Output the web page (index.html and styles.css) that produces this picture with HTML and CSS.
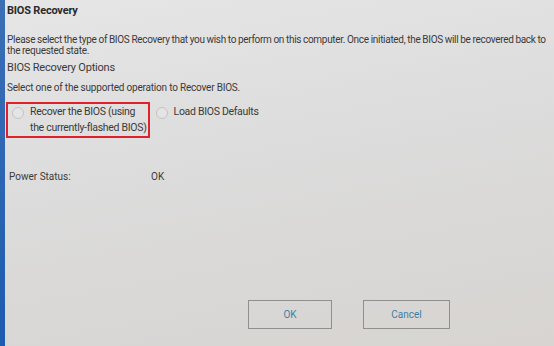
FILE: index.html
```html
<!DOCTYPE html>
<html lang="en">
<head>
  <meta charset="UTF-8">
  <title>BIOS Recovery</title>
  <link rel="stylesheet" href="styles.css">
</head>
<body>
  <div class="screen">
    <div class="edge"></div>
    <div class="panel">
      <h1>BIOS Recovery</h1>
      <p class="intro">Please select the type of BIOS Recovery that you wish to perform on this computer. Once initiated, the BIOS will be recovered back to the requested state.</p>
      <h2>BIOS Recovery Options</h2>
      <p class="hint">Select one of the supported operation to Recover BIOS.</p>

      <div class="options">
        <label class="option selected">
          <span class="radio"></span>
          <span class="option-text">Recover the BIOS (using<br>the currently-flashed BIOS)</span>
        </label>
        <label class="option">
          <span class="radio"></span>
          <span class="option-text">Load BIOS Defaults</span>
        </label>
      </div>

      <div class="status">
        <span class="status-label">Power Status:</span>
        <span class="status-value">OK</span>
      </div>

      <div class="actions">
        <button class="btn">OK</button>
        <button class="btn">Cancel</button>
      </div>
    </div>
  </div>
</body>
</html>
```

FILE: styles.css
```css
body {
  margin: 0;
  font-family: 'Roboto', 'Liberation Sans', sans-serif;
  color: #3a3a3a;
  width: 554px;
  height: 346px;
  overflow: hidden;
}
.screen {
  display: flex;
  height: 346px;
  background: linear-gradient(170deg, #e6e6e6 0%, #dcdcdc 45%, #d7d4d1 100%);
}
.edge {
  width: 5px;
  background: linear-gradient(180deg, #3b6fb5 0%, #1d5bb0 100%);
}
.panel {
  flex: 1;
  display: flex;
  flex-direction: column;
  padding: 4px 4px 17px 2px;
}
h1 {
  margin: 0;
  font-size: 11px;
  font-weight: bold;
  color: #2a2a2a;
  line-height: 14px;
  letter-spacing: -0.2px;
}
.intro {
  margin: 16px 0 0;
  font-size: 10px;
  line-height: 11px;
  letter-spacing: -0.3px;
  word-spacing: -0.3px;
}
h2 {
  margin: 5px 0 0;
  font-size: 11px;
  font-weight: normal;
  line-height: 14px;
  letter-spacing: -0.2px;
}
.hint {
  margin: 7px 0 0;
  font-size: 10px;
  line-height: 12px;
  letter-spacing: -0.2px;
}
.options {
  display: flex;
  align-items: flex-start;
  margin-top: 8px;
  margin-left: -1px;
}
.option {
  display: flex;
  align-items: flex-start;
  gap: 6px;
  font-size: 10.5px;
  line-height: 16px;
  padding: 0 0 0 4px;
  border: 2px solid transparent;
  white-space: nowrap;
  letter-spacing: -0.3px;
}
.option.selected {
  border-color: #e0202a;
  padding-right: 1px;
}
.radio {
  width: 10px;
  height: 10px;
  border-radius: 50%;
  border: 1px solid #c4c4c4;
  background: #e4e4e4;
  margin-top: 3px;
  flex-shrink: 0;
}
.status {
  display: flex;
  margin-top: 33px;
  margin-left: 2px;
  font-size: 10px;
  line-height: 12px;
}
.status-label {
  width: 142px;
}
.actions {
  display: flex;
  gap: 31px;
  margin-top: auto;
  margin-left: 241px;
}
.btn {
  width: 84px;
  height: 29px;
  font-family: inherit;
  font-size: 10px;
  color: #3f7ea6;
  background: transparent;
  border: 1px solid #8f8f8f;
}
.btn + .btn {
  width: 87px;
}
```
